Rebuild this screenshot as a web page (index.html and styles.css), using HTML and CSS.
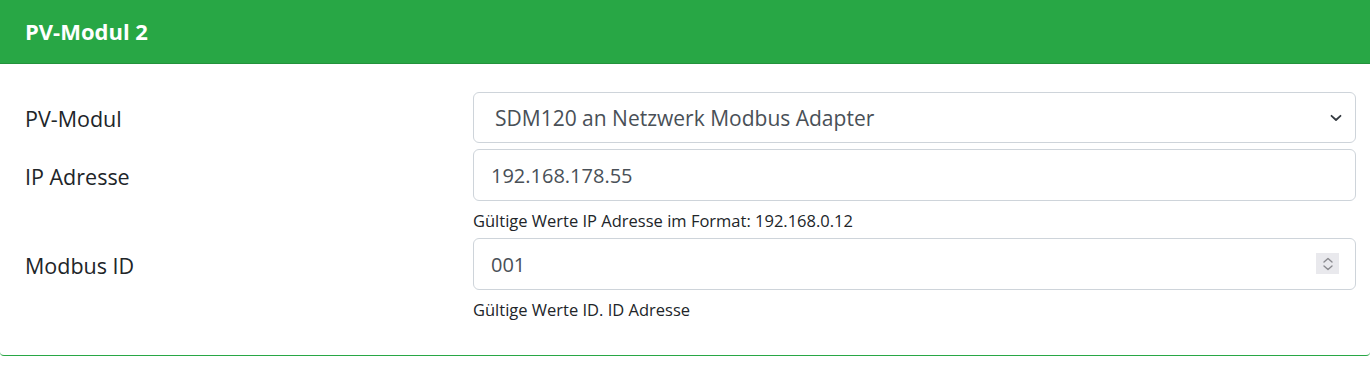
FILE: index.html
```html
<!DOCTYPE html>
<html lang="de">
<head>
    <meta charset="UTF-8">
    <meta name="viewport" content="width=device-width, initial-scale=1.0">
    <title>PV-Modul 2</title>
    <link rel="stylesheet" href="styles.css">
</head>
<body>
    <div class="card">
        <div class="card-header">PV-Modul 2</div>
        <div class="card-body">
            <div class="form-row">
                <label class="col-label" for="pvmodul">PV-Modul</label>
                <div class="col-field">
                    <div class="select-wrap">
                        <select id="pvmodul" class="form-control">
                            <option>SDM120 an Netzwerk Modbus Adapter</option>
                        </select>
                        <svg class="select-arrow" width="12" height="8" viewBox="0 0 12 8">
                            <path d="M1.5 1.8 L6 6 L10.5 1.8" fill="none" stroke="#343a40" stroke-width="1.8" stroke-linecap="round" stroke-linejoin="round"/>
                        </svg>
                    </div>
                </div>
            </div>
            <div class="form-row">
                <label class="col-label" for="ip">IP Adresse</label>
                <div class="col-field">
                    <input id="ip" class="form-control input" type="text" value="192.168.178.55">
                    <div class="help">Gültige Werte IP Adresse im Format: 192.168.0.12</div>
                </div>
            </div>
            <div class="form-row">
                <label class="col-label" for="modbusid">Modbus ID</label>
                <div class="col-field">
                    <div class="number-wrap">
                        <input id="modbusid" class="form-control input" type="number" value="001">
                        <span class="spinner">
                            <svg width="12" height="14" viewBox="0 0 12 14">
                                <path d="M2 5 L6 1.5 L10 5 M2 9 L6 12.5 L10 9" fill="none" stroke="#8a8a8f" stroke-width="1.4" stroke-linecap="round" stroke-linejoin="round"/>
                            </svg>
                        </span>
                    </div>
                    <div class="help">Gültige Werte ID. ID Adresse</div>
                </div>
            </div>
        </div>
    </div>
</body>
</html>
```

FILE: styles.css
```css
body {
    margin: 0;
    font-family: 'Open Sans', 'Noto Sans', sans-serif;
    color: #212529;
    background: #fff;
}
.card {
    border-bottom: 1px solid #28a745;
    border-radius: 0 0 4px 4px;
    height: 356px;
    box-sizing: border-box;
}
.card-header {
    background: #28a745;
    color: #fff;
    font-weight: 700;
    font-size: 22px;
    height: 64px;
    box-sizing: border-box;
    border-bottom: 1px solid rgba(0, 0, 0, 0.125);
    padding: 0 25px 2px;
    display: flex;
    align-items: center;
}
.card-body {
    padding: 28px 14px 0 25px;
}
.form-row {
    display: grid;
    grid-template-columns: 448px 1fr;
    margin-bottom: 6px;
}
.form-row + .form-row {
    margin-bottom: 7px;
}
.col-label {
    font-size: 21.5px;
    height: 52px;
    box-sizing: border-box;
    padding-top: 2px;
    display: flex;
    align-items: center;
}
.form-row:first-child .col-label {
    height: 51px;
}
.form-control {
    display: block;
    width: 100%;
    box-sizing: border-box;
    font-family: inherit;
    color: #495057;
    background: #fff;
    border: 1px solid #ced4da;
    border-radius: 6px;
    outline: none;
    margin: 0;
}
.select-wrap, .number-wrap {
    position: relative;
}
select.form-control {
    font-size: 21px;
    height: 51px;
    padding: 0 40px 0 21px;
    appearance: none;
    -webkit-appearance: none;
}
.select-arrow {
    position: absolute;
    right: 14px;
    top: 22px;
}
.input {
    font-size: 20px;
    height: 52px;
    padding: 0 17px;
}
.input[type=number]::-webkit-inner-spin-button,
.input[type=number]::-webkit-outer-spin-button {
    -webkit-appearance: none;
    margin: 0;
}
.spinner {
    position: absolute;
    right: 17px;
    top: 15px;
    width: 23px;
    height: 21px;
    background: #e9e9ed;
    display: flex;
    align-items: center;
    justify-content: center;
}
.help {
    font-size: 16.5px;
    line-height: 20px;
    margin-top: 10px;
    color: #212529;
}
```
